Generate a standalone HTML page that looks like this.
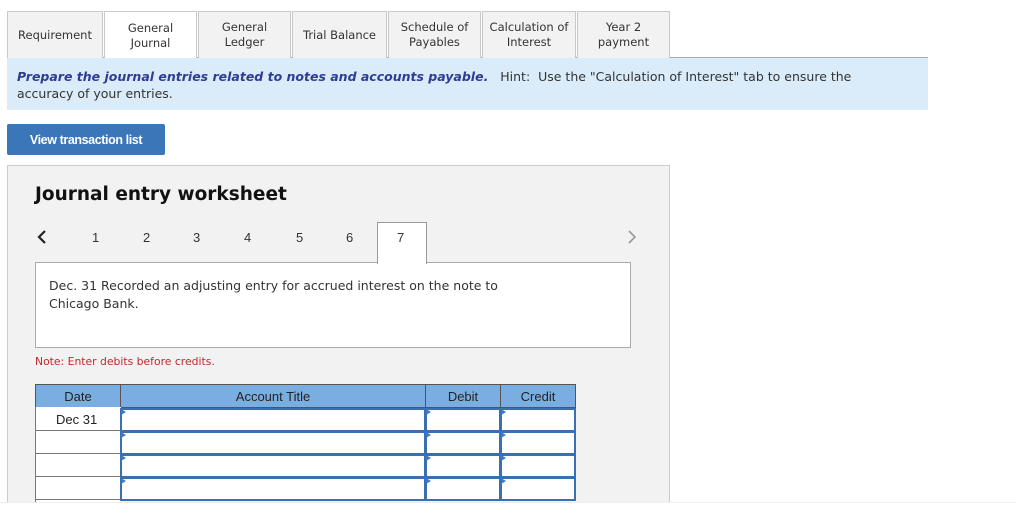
<!DOCTYPE html>
<html><head><meta charset="utf-8"><style>
*{box-sizing:border-box;margin:0;padding:0}
body{width:1016px;height:512px;background:#fff;position:relative;overflow:hidden;font-family:"DejaVu Sans","Liberation Sans",sans-serif;font-size:12px;color:#222}
.a{position:absolute}
.tab{position:absolute;top:11px;height:47px;background:#f2f2f2;border:1px solid #c8c8c8;border-bottom:none;display:flex;align-items:center;justify-content:center;text-align:center;font-size:11.5px;line-height:15px;color:#333}
.tab.on{background:#fff;height:48px}
.tl{position:absolute;top:57px;left:7px;width:921px;height:1px;background:#aaa}
.ban{left:7px;top:58px;width:921px;height:52px;background:#daecf9;padding:10px 36px 10px 10px;font-size:12.5px;line-height:17px;color:#333}
.ban b{color:#2e3c96;font-style:italic}
.btn{left:7px;top:124px;width:158px;height:31px;background:#3a76b8;border-radius:2px;color:#fff;font-family:"Liberation Sans",sans-serif;font-weight:bold;font-size:12.5px;letter-spacing:-0.4px;display:flex;align-items:center;justify-content:center}
.pan{left:7px;top:165px;width:663px;height:345px;background:#f2f2f2;border:1px solid #ccc}
.n{position:absolute;top:230px;font-family:"Liberation Sans",sans-serif;font-size:13px;color:#333}
.h{position:absolute;top:384px;height:24px;background:#7aaee3;border:1px solid #555;font-family:"Liberation Sans",sans-serif;font-size:13px;color:#222;display:flex;align-items:center;justify-content:center}
.in{position:absolute;background:#fff;border:2px solid #3a6fb0}
.in::before{content:"";position:absolute;left:-1px;top:-1px;border-left:5px solid #3a7ac8;border-top:3px solid transparent;border-bottom:3px solid transparent}
</style></head><body>
<div class="tl"></div>
<div class="tab" style="left:7px;width:96px">Requirement</div>
<div class="tab on" style="left:104px;width:93px">General<br>Journal</div>
<div class="tab" style="left:198px;width:93px">General<br>Ledger</div>
<div class="tab" style="left:292px;width:95px">Trial Balance</div>
<div class="tab" style="left:388px;width:93px">Schedule of<br>Payables</div>
<div class="tab" style="left:482px;width:94px">Calculation of<br>Interest</div>
<div class="tab" style="left:577px;width:93px">Year 2<br>payment</div>
<div class="a ban"><b>Prepare the journal entries related to notes and accounts payable.</b>&nbsp;&nbsp; Hint:&nbsp; Use the "Calculation of Interest" tab to ensure the accuracy of your entries.</div>
<div class="a btn">View transaction list</div>
<div class="a pan"></div>
<div class="a" style="left:35px;top:184px;font-size:18.5px;font-weight:bold;color:#111">Journal entry worksheet</div>
<svg class="a" style="left:36px;top:229px" width="12" height="16"><path d="M9 2 L3 8 L9 14" stroke="#222" stroke-width="2.2" fill="none"/></svg>
<svg class="a" style="left:626px;top:229px" width="12" height="16"><path d="M3 2 L9 8 L3 14" stroke="#999" stroke-width="1.6" fill="none"/></svg>
<div class="n" style="left:92px">1</div><div class="n" style="left:143px">2</div><div class="n" style="left:193px">3</div><div class="n" style="left:244px">4</div><div class="n" style="left:296px">5</div><div class="n" style="left:346px">6</div>
<div class="a" style="left:35px;top:262px;width:596px;height:86px;background:#fff;border:1px solid #aaa"></div>
<div class="a" style="left:377px;top:222px;width:50px;height:42px;background:#fff;border:1px solid #999;border-bottom:none"></div>
<div class="n" style="left:397px">7</div>
<div class="a" style="left:49px;top:277px;font-size:12.5px;line-height:18px;color:#333;width:485px">Dec. 31 Recorded an adjusting entry for accrued interest on the note to Chicago Bank.</div>
<div class="a" style="left:35px;top:355px;font-size:10.8px;color:#c0282d">Note: Enter debits before credits.</div>
<div class="h" style="left:35px;width:86px">Date</div>
<div class="h" style="left:120px;width:306px">Account Title</div>
<div class="h" style="left:425px;width:76px">Debit</div>
<div class="h" style="left:500px;width:76px">Credit</div>
<div class="a" style="left:35px;top:407px;width:86px;height:95px;background:#fff;border-left:1px solid #777"></div>
<div class="a" style="left:35px;top:430px;width:86px;height:1px;background:#777"></div>
<div class="a" style="left:35px;top:453px;width:86px;height:1px;background:#777"></div>
<div class="a" style="left:35px;top:476px;width:86px;height:1px;background:#777"></div>
<div class="a" style="left:35px;top:499px;width:86px;height:1px;background:#777"></div>
<div class="a" style="left:56px;top:412px;font-family:'Liberation Sans';font-size:13px;color:#222">Dec 31</div>
<div class="in" style="left:120px;top:408px;width:306px;height:24px"></div>
<div class="in" style="left:425px;top:408px;width:76px;height:24px"></div>
<div class="in" style="left:500px;top:408px;width:76px;height:24px"></div>
<div class="in" style="left:120px;top:431px;width:306px;height:24px"></div>
<div class="in" style="left:425px;top:431px;width:76px;height:24px"></div>
<div class="in" style="left:500px;top:431px;width:76px;height:24px"></div>
<div class="in" style="left:120px;top:454px;width:306px;height:24px"></div>
<div class="in" style="left:425px;top:454px;width:76px;height:24px"></div>
<div class="in" style="left:500px;top:454px;width:76px;height:24px"></div>
<div class="in" style="left:120px;top:477px;width:306px;height:24px"></div>
<div class="in" style="left:425px;top:477px;width:76px;height:24px"></div>
<div class="in" style="left:500px;top:477px;width:76px;height:24px"></div>
<div class="a" style="left:0;top:502px;width:1016px;height:10px;background:#fff;border-top:1px solid #eee"></div>
</body></html>
